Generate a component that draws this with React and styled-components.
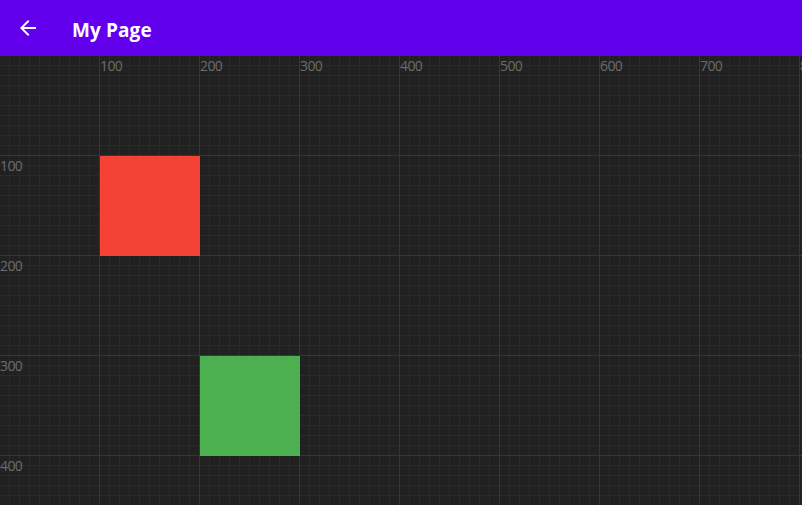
import React from 'react';
import styled, { createGlobalStyle } from 'styled-components';

const GlobalStyle = createGlobalStyle`
html, body {
margin: 0;
padding: 0;
background: #202020;
font-family: "Open Sans", "Noto Sans", sans-serif;
overflow: hidden;
}
`

const Page = styled.div`
width: 802px;
height: 505px;
display: flex;
flex-direction: column;
`

const AppBar = styled.header`
height: 56px;
flex-shrink: 0;
background-color: #6200ee;
display: flex;
align-items: center;
padding: 0 16px;
box-sizing: border-box;
`

const BackButton = styled.button`
width: 24px;
height: 24px;
padding: 0;
border: none;
background: none;
color: #fff;
display: flex;
align-items: center;
justify-content: center;
margin-top: -1px;
`

const Title = styled.h1`
margin: 0 0 0 32px;
padding-top: 4px;
color: #fff;
font-size: 19px;
font-weight: 700;
letter-spacing: 0.1px;
`

const Canvas = styled.div`
position: relative;
flex: 1;
overflow: hidden;
background-color: #212121;
background-image:
  linear-gradient(to right, #363636 1px, transparent 1px),
  linear-gradient(to bottom, #363636 1px, transparent 1px),
  linear-gradient(to right, #2a2a2a 1px, transparent 1px),
  linear-gradient(to bottom, #2a2a2a 1px, transparent 1px);
background-size: 100px 100px, 100px 100px, 10px 10px, 10px 10px;
background-position: -1px -1px, -1px -1px, -1px -1px, -1px -1px;
`

const Tick = styled.span`
position: absolute;
color: #6c6c6c;
font-size: 14px;
line-height: 17px;
letter-spacing: -0.6px;
white-space: nowrap;
`

const Shape = styled.div`
position: absolute;
width: 100px;
height: 100px;
background-color: ${p => p.color};
`

const xs = [100, 200, 300, 400, 500, 600, 700, 800];
const ys = [100, 200, 300, 400];

const shapes = [
  { x: 100, y: 100, color: '#f44336' },
  { x: 200, y: 300, color: '#4caf50' },
];

export default function App() {
  return (
    <Page>
      <GlobalStyle />
      <AppBar>
        <BackButton aria-label="back">
          <svg width="24" height="24" viewBox="0 0 24 24" fill="currentColor">
            <path d="M20 11H7.83l5.59-5.59L12 4l-8 8 8 8 1.41-1.41L7.83 13H20v-2z" />
          </svg>
        </BackButton>
        <Title>My Page</Title>
      </AppBar>
      <Canvas>
        {xs.map(x => (
          <Tick key={'x' + x} style={{ left: x, top: 1 }}>{x}</Tick>
        ))}
        {ys.map(y => (
          <Tick key={'y' + y} style={{ left: 0, top: y + 1 }}>{y}</Tick>
        ))}
        {shapes.map((s, i) => (
          <Shape key={i} color={s.color} style={{ left: s.x, top: s.y }} />
        ))}
      </Canvas>
    </Page>
  );
}
